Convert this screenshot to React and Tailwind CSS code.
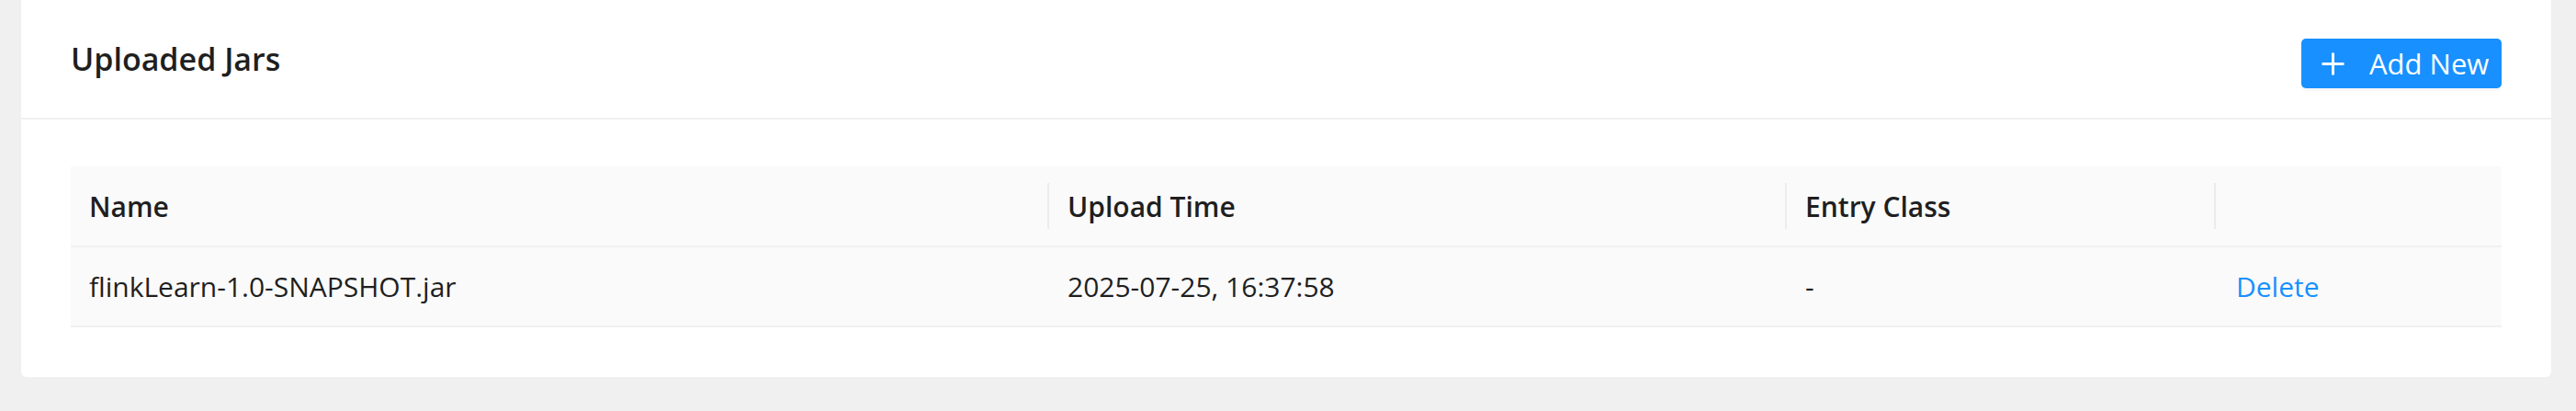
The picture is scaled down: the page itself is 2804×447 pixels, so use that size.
import React from 'react';

const columns = [
    { key: 'name', title: 'Name', width: 'w-[1065px]' },
    { key: 'uploadTime', title: 'Upload Time', width: 'w-[803px]' },
    { key: 'entryClass', title: 'Entry Class', width: 'w-[467px]' },
    { key: 'action', title: '', width: 'w-[311px]' },
];

const jars = [
    { id: 'jar-1', name: 'flinkLearn-1.0-SNAPSHOT.jar', uploadTime: '2025-07-25, 16:37:58', entryClass: '-' },
];

const PlusIcon = () => (
    <svg width="25" height="25" viewBox="0 0 25 25" fill="none">
        <path d="M12.5 0.5v24M0.5 12.5h24" stroke="currentColor" strokeWidth="3" />
    </svg>
);

const App = () => {
    return (
        <div className="w-[2804px] h-[447px] bg-[#f0f0f0] pl-[23px] pr-[27px] font-['Open_Sans',sans-serif] text-[#1f1f1f]">
            <div className="h-[410px] bg-white rounded-b-[6px]">
                {/* card head */}
                <div className="h-[130px] flex items-center justify-between px-[54px] border-b-2 border-[#f0f0f0]">
                    <h2 className="text-[34px] font-semibold leading-none">Uploaded Jars</h2>
                    <button className="mt-[10px] h-[54px] w-[218px] flex items-center pl-[22px] gap-[27px] bg-[#1890ff] text-white rounded-[5px] shadow-[0_3px_0_rgba(0,0,0,0.03)]">
                        <PlusIcon />
                        <span className="text-[31px] leading-none">Add New</span>
                    </button>
                </div>

                {/* card body */}
                <div className="px-[54px] pt-[51px]">
                    <div className="text-[30px]">
                        <div className="flex h-[88px] bg-[#fafafa] border-b-2 border-[#f0f0f0]">
                            {columns.map((col, i) => (
                                <div key={col.key} className={`${col.width} flex items-center justify-between pl-[20px] font-semibold`}>
                                    <span>{col.title}</span>
                                    {i < columns.length - 1 && <span className="w-[2px] h-[50px] bg-[#ececec]" />}
                                </div>
                            ))}
                        </div>
                        {jars.map((jar) => (
                            <div key={jar.id} className="flex h-[87px] bg-[#fafafa] border-b-2 border-[#f0f0f0]">
                                <div className="w-[1065px] flex items-center pl-[20px]">{jar.name}</div>
                                <div className="w-[803px] flex items-center pl-[20px]">{jar.uploadTime}</div>
                                <div className="w-[467px] flex items-center pl-[20px]">{jar.entryClass}</div>
                                <div className="w-[311px] flex items-center pl-[22px] text-[#1890ff]">Delete</div>
                            </div>
                        ))}
                    </div>
                </div>
            </div>
        </div>
    );
};

export default App;
